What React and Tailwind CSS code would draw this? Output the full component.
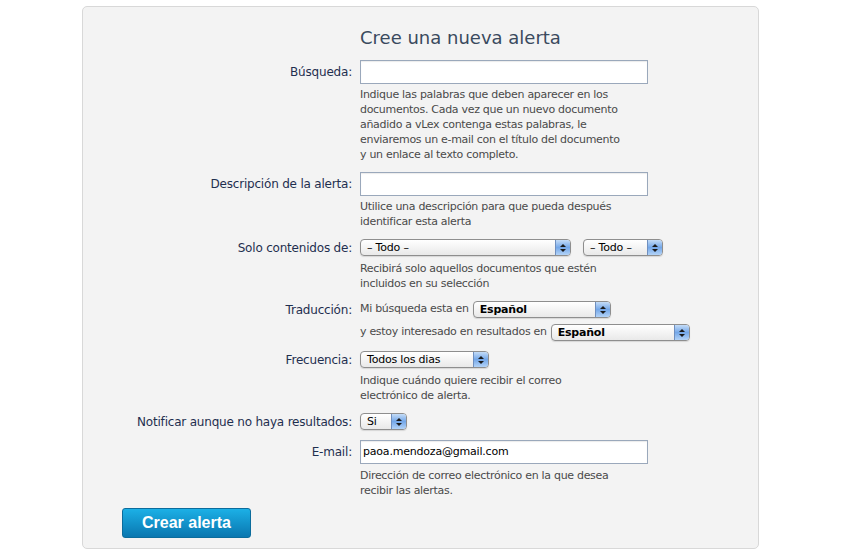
import React from 'react';

const font = { fontFamily: '"DejaVu Sans", Verdana, sans-serif' };

function MacSelect({ value, width, bold = false }) {
  return (
    <div
      className={`flex h-[17px] items-stretch rounded-[4px] border border-[#8e8e8e] bg-gradient-to-b from-white to-[#e9e9e9] shadow-[0_1px_1px_rgba(0,0,0,0.12)] ${width}`}
    >
      <span className={`flex-1 truncate pl-[6px] text-[11px] leading-[15px] tracking-[-0.2px] text-black ${bold ? 'font-semibold' : ''}`}>{value}</span>
      <span className="flex w-[15px] flex-col items-center justify-center gap-[2px] rounded-r-[3px] border-l border-[#6f8fbf] bg-gradient-to-b from-[#c4dcf7] via-[#74a7e8] to-[#b3d3f7]">
        <svg width="6" height="3" viewBox="0 0 6 3"><path d="M0 3 L3 0 L6 3 Z" fill="#1a1a1a" /></svg>
        <svg width="6" height="3" viewBox="0 0 6 3"><path d="M0 0 L3 3 L6 0 Z" fill="#1a1a1a" /></svg>
      </span>
    </div>
  );
}

function Field({ label, children, help, controlH = 'h-[24px]', helpGap = 'mt-[3px]', className = 'mb-[10px]' }) {
  return (
    <div className={`flex gap-x-[8px] ${className}`}>
      <div className={`flex w-[269px] shrink-0 items-center justify-end text-[12px] tracking-[-0.2px] text-[#1f2f4f] ${controlH}`}>{label}</div>
      <div className="flex flex-col">
        {children}
        {help && (
          <p className={`${helpGap} text-[11px] leading-[15px] tracking-[-0.3px] text-[#4a4a4a]`}>{help}</p>
        )}
      </div>
    </div>
  );
}

function TextInput({ value = '' }) {
  return (
    <div className="flex h-[24px] w-[288px] items-center border border-[#9aa8bb] bg-white px-[2px] text-[11px] tracking-[-0.2px] text-black shadow-[inset_0_1px_1px_rgba(0,0,0,0.08)]">
      {value}
    </div>
  );
}

export default function App() {
  return (
    <div className="min-h-[557px] bg-white pt-[6px]" style={font}>
      <div className="ml-[82px] w-[677px] rounded-[5px] border border-[#d8d8d8] bg-[#f3f3f3] pb-[10px] pt-[19px]">
        <h1 className="mb-[10px] ml-[277px] text-[18px] leading-[24px] text-[#3a4a5e]">Cree una nueva alerta</h1>

        <Field
          label="Búsqueda:"
          help={
            <>
              Indique las palabras que deben aparecer en los
              <br />documentos. Cada vez que un nuevo documento
              <br />añadido a vLex contenga estas palabras, le
              <br />enviaremos un e-mail con el título del documento
              <br />y un enlace al texto completo.
            </>
          }
        >
          <TextInput />
        </Field>

        <Field
          label="Descripción de la alerta:"
          help={<>Utilice una descripción para que pueda después<br />identificar esta alerta</>}
        >
          <TextInput />
        </Field>

        <Field
          label="Solo contenidos de:"
          controlH="h-[17px]"
          helpGap="mt-[5px]"
          help={<>Recibirá solo aquellos documentos que estén<br />incluidos en su selección</>}
        >
          <div className="flex gap-[12px]">
            <MacSelect value="– Todo –" width="w-[211px]" />
            <MacSelect value="– Todo –" width="w-[80px]" />
          </div>
        </Field>

        <Field label="Traducción:" controlH="h-[17px]" className="mb-[6px]">
          <div className="flex items-center gap-[4px] text-[11px] tracking-[-0.3px] text-[#4a4a4a]">
            <span>Mi búsqueda esta en</span>
            <MacSelect value="Español" width="w-[138px]" bold />
          </div>
        </Field>
        <div className="mb-[10px] ml-[277px] flex items-center gap-[4px] text-[11px] tracking-[-0.3px] text-[#4a4a4a]">
          <span>y estoy interesado en resultados en</span>
          <MacSelect value="Español" width="w-[139px]" bold />
        </div>

        <Field
          label="Frecuencia:"
          controlH="h-[17px]"
          helpGap="mt-[5px]"
          help={<>Indique cuándo quiere recibir el correo<br />electrónico de alerta.</>}
        >
          <MacSelect value="Todos los dias" width="w-[129px]" />
        </Field>

        <Field label="Notificar aunque no haya resultados:" controlH="h-[17px]">
          <MacSelect value="Si" width="w-[47px]" />
        </Field>

        <Field
          label="E-mail:"
          helpGap="mt-[4px]"
          help={<>Dirección de correo electrónico en la que desea<br />recibir las alertas.</>}
        >
          <TextInput value="paoa.mendoza@gmail.com" />
        </Field>

        <button
          className="ml-[39px] h-[30px] w-[129px] rounded-[3px] border border-[#0b6c9c] bg-gradient-to-b from-[#1cb0e6] to-[#0a77b0] text-[16px] font-bold text-white"
          style={{ fontFamily: '"Liberation Sans", Arial, sans-serif' }}
        >
          Crear alerta
        </button>
      </div>
    </div>
  );
}
